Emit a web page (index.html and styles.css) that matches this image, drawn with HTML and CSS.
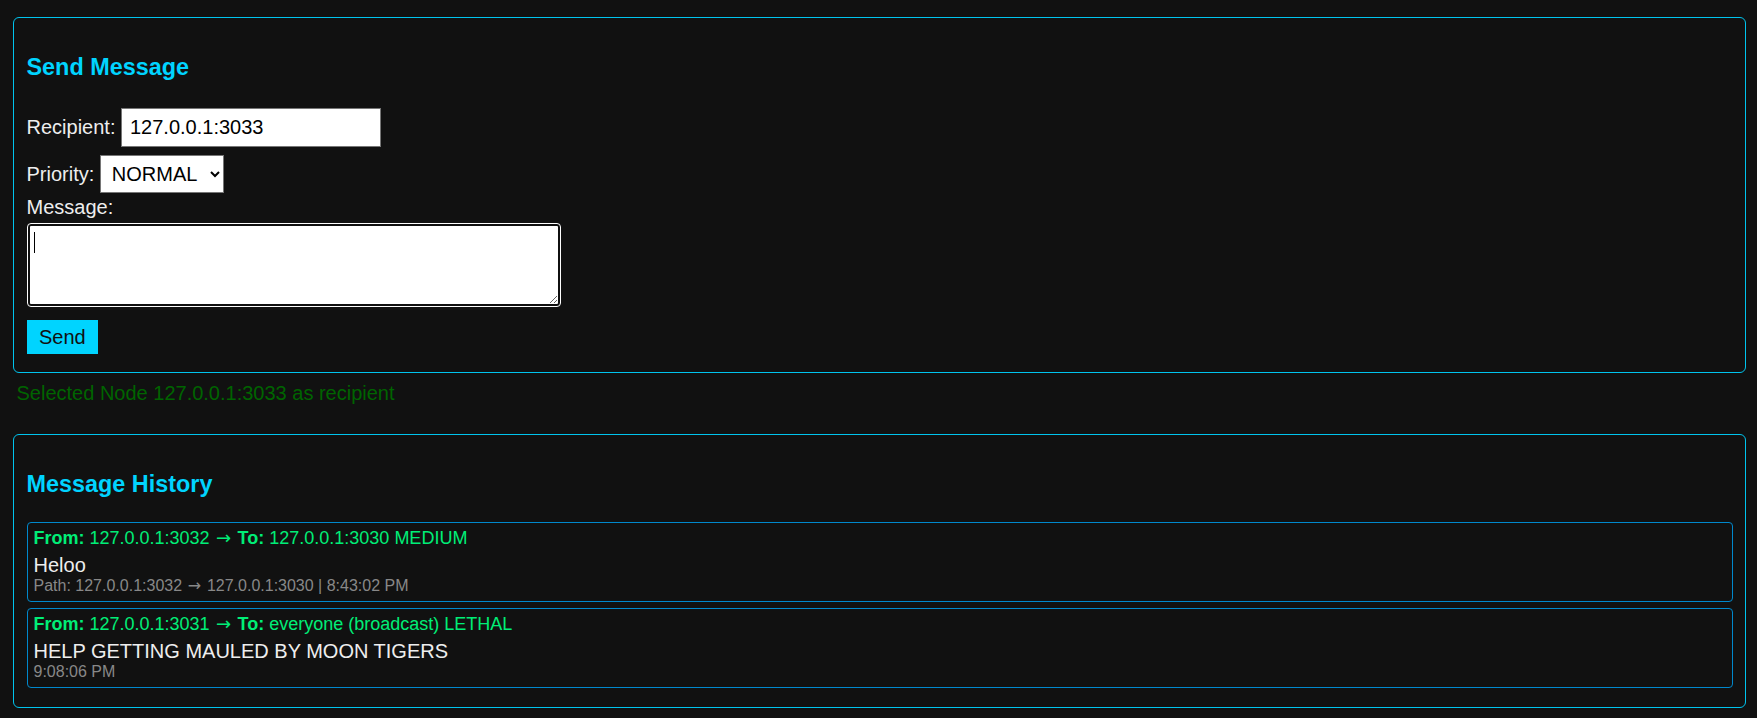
FILE: index.html
```html
<!DOCTYPE html>
<html lang="en">
<head>
<meta charset="utf-8">
<title>Mesh Messenger</title>
<link rel="stylesheet" href="styles.css">
</head>
<body>
<section class="panel">
  <h3 class="title">Send Message</h3>
  <div class="form">
    <div class="row row-recipient"><label class="lbl" for="rcpt">Recipient:</label> <input id="rcpt" class="text-input" type="text" value="127.0.0.1:3033"></div>
    <div class="row row-priority"><label class="lbl" for="prio">Priority:</label> <select id="prio" class="select"><option>LOW</option><option selected>NORMAL</option><option>MEDIUM</option><option>HIGH</option><option>LETHAL</option></select></div>
    <label class="lbl block-label" for="msg">Message:</label>
    <div class="ta-wrap"><textarea id="msg" class="textarea"></textarea><span class="caret"></span></div>
    <button class="send" type="button">Send</button>
  </div>
</section>
<div class="status">Selected Node 127.0.0.1:3033 as recipient</div>
<section class="panel">
  <h3 class="title title-history">Message History</h3>
  <div class="msg">
    <div class="meta"><b>From:</b> 127.0.0.1:3032 <span class="arrow">→</span> <b>To:</b> 127.0.0.1:3030 MEDIUM</div>
    <div class="body">Heloo</div>
    <div class="path">Path: 127.0.0.1:3032 <span class="arrow">→</span> 127.0.0.1:3030 | 8:43:02 PM</div>
  </div>
  <div class="msg">
    <div class="meta"><b>From:</b> 127.0.0.1:3031 <span class="arrow">→</span> <b>To:</b> everyone (broadcast) LETHAL</div>
    <div class="body">HELP GETTING MAULED BY MOON TIGERS</div>
    <div class="path">9:08:06 PM</div>
  </div>
</section>
</body>
</html>
```
FILE: styles.css
```css
html, body {
  background: #111111;
}
body {
  margin: 0;
  padding: 17px 11px 0 13px;
  font-family: "Liberation Sans", Arial, sans-serif;
  font-size: 20px;
  color: #eeeeee;
}
.panel {
  border: 1px solid #00c4ee;
  border-radius: 6px;
  padding: 12.5px;
}
.title {
  margin: 23px 0 24.4px;
  font-size: 23.4px;
  font-weight: bold;
  color: #00d4ff;
  line-height: normal;
}
.form {
  padding: 3.5px 0 5px;
}
.row-priority {
  margin-top: 8.3px;
}
.lbl {
  color: #eeeeee;
}
.text-input {
  box-sizing: border-box;
  width: 260px;
  height: 38.4px;
  padding: 0 8px;
  margin: 0;
  border: 1px solid #767676;
  border-radius: 0;
  background: #ffffff;
  color: #000000;
  font-family: "Liberation Sans", Arial, sans-serif;
  font-size: 20px;
  vertical-align: baseline;
}
.select {
  box-sizing: border-box;
  width: 124px;
  height: 37.7px;
  padding: 0 4px 0 7px;
  margin: 0;
  border: 1px solid #767676;
  border-radius: 0;
  background-color: #ffffff;
  color: #000000;
  font-family: "Liberation Sans", Arial, sans-serif;
  font-size: 20px;
}
.block-label {
  display: block;
  margin-top: 3.2px;
}
.ta-wrap {
  position: relative;
  margin-top: 5.4px;
  width: 534px;
}
.textarea {
  display: block;
  box-sizing: border-box;
  width: 532px;
  height: 82px;
  margin: 0 0 0 1px;
  padding: 4px;
  border: 2px solid #101010;
  border-radius: 3px;
  outline: 1px solid #ffffff;
  outline-offset: 0;
  background: #ffffff;
  color: #000000;
  font-family: "Liberation Sans", Arial, sans-serif;
  font-size: 20px;
}
.caret {
  position: absolute;
  left: 7.8px;
  top: 7.4px;
  width: 1px;
  height: 21.6px;
  background: #000000;
}
.send {
  display: block;
  margin: 13.7px 0 0;
  padding: 5.6px 12.5px;
  line-height: 23px;
  border: none;
  border-radius: 0;
  background: #00d4ff;
  color: #111111;
  font-family: "Liberation Sans", Arial, sans-serif;
  font-size: 20px;
}
.status {
  margin: 9.5px 0 29px;
  padding-left: 3.5px;
  color: #006400;
  line-height: normal;
}
.msg {
  border: 1px solid #0088cc;
  border-radius: 4px;
  padding: 5px 6px 6px;
  margin-bottom: 6.5px;
}
.meta {
  font-size: 18px;
  color: #00ee77;
  margin-bottom: 4.5px;
}
.meta b {
  font-weight: bold;
}
.arrow {
  font-family: "DejaVu Sans", sans-serif;
  line-height: 1;
  padding: 0 0.08em;
}
.body {
  font-size: 20px;
  color: #eeeeee;
}
.path {
  font-size: 16px;
  color: #888888;
}
```
